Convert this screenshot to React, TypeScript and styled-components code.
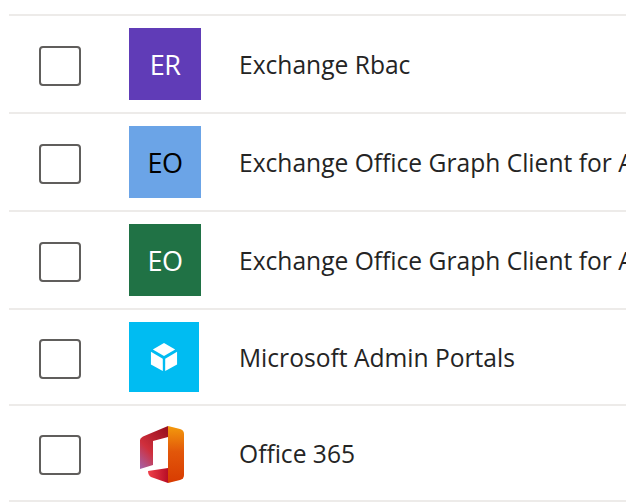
import styled, { createGlobalStyle } from "styled-components";

const Global = createGlobalStyle`
  html, body {
    margin: 0;
    padding: 0;
    background: #fff;
    overflow: hidden;
  }
`;

const List = styled.div`
  width: 626px;
  height: 503px;
  overflow: hidden;
  padding: 14px 0 0 9px;
  box-sizing: border-box;
  font-family: "Open Sans", "Noto Sans", sans-serif;
`;

const Row = styled.div<{ $height: number }>`
  height: ${(p) => p.$height}px;
  box-sizing: border-box;
  border-top: 2px solid #edebe9;
  display: flex;
  align-items: center;
  white-space: nowrap;
  &:last-child {
    border-bottom: 2px solid #edebe9;
  }
`;

const CheckCell = styled.div`
  width: 120px;
  flex: none;
  padding: 4px 0 0 30px;
  box-sizing: border-box;
`;

const Checkbox = styled.div`
  width: 42px;
  height: 40px;
  box-sizing: border-box;
  border: 2px solid #605e5c;
  border-radius: 4px;
`;

const IconCell = styled.div`
  width: 110px;
  flex: none;
`;

const Tile = styled.div<{ $bg: string; $fg: string; $size?: number }>`
  width: ${(p) => p.$size ?? 72}px;
  height: ${(p) => p.$size ?? 72}px;
  background: ${(p) => p.$bg};
  color: ${(p) => p.$fg};
  font-size: 27px;
  letter-spacing: -0.5px;
  display: flex;
  align-items: center;
  justify-content: center;
`;

const Name = styled.div`
  font-size: 24.6px;
  color: #242424;
`;

const OfficeSvg = styled.svg`
  display: block;
  margin: 2px 0 0 11px;
`;

const CubeIcon = () => (
  <svg width="28" height="30" viewBox="0 0 30 32">
    <path d="M15 1 L27 8 L15 15 L3 8 Z" fill="#fff" />
    <path d="M1 10.5 L13.7 18 L13.7 31 L1 24 Z" fill="#fff" />
    <path d="M29 10.5 L16.3 18 L16.3 31 L29 24 Z" fill="#fff" />
  </svg>
);

const OfficeIcon = () => (
  <OfficeSvg width="44" height="57" viewBox="0 0 44 57">
    <defs>
      <linearGradient id="o-right" x1="0" y1="0" x2="0" y2="1">
        <stop offset="0" stopColor="#f39a0c" />
        <stop offset="0.45" stopColor="#e2570a" />
        <stop offset="1" stopColor="#d83b01" />
      </linearGradient>
      <linearGradient id="o-left" x1="0.8" y1="0" x2="0.1" y2="1">
        <stop offset="0" stopColor="#9c1220" />
        <stop offset="0.6" stopColor="#cf2f3c" />
        <stop offset="1" stopColor="#a85ea0" />
      </linearGradient>
      <linearGradient id="o-bottom" x1="0" y1="0" x2="1" y2="0">
        <stop offset="0" stopColor="#f0404a" />
        <stop offset="1" stopColor="#b80d26" />
      </linearGradient>
    </defs>
    <path d="M0 14 Q0 12 3 10.5 L28 0 L28 11 L13 15 L13 39 L0 43 Z" fill="url(#o-left)" />
    <path d="M8 45 L28 42 L28 57 L11 51 Q8 49 8 45 Z" fill="url(#o-bottom)" />
    <path d="M28 0 L40 3 Q44 4 44 8 L44 49 Q44 53 40 54 L28 57 Z" fill="url(#o-right)" />
  </OfficeSvg>
);

const rows = [
  { height: 98, name: "Exchange Rbac", icon: <Tile $bg="#603cb7" $fg="#fff">ER</Tile> },
  { height: 98, name: "Exchange Office Graph Client for AAD - Interactive", icon: <Tile $bg="#6ba4e7" $fg="#000">EO</Tile> },
  { height: 98, name: "Exchange Office Graph Client for AAD - Noninteractive", icon: <Tile $bg="#207245" $fg="#fff">EO</Tile> },
  { height: 96, name: "Microsoft Admin Portals", icon: <Tile $bg="#00bcf2" $fg="#fff" $size={70}><CubeIcon /></Tile> },
  { height: 98, name: "Office 365", icon: <OfficeIcon /> },
];

export default function App() {
  return (
    <List>
      <Global />
      {rows.map((r) => (
        <Row key={r.name} $height={r.height}>
          <CheckCell>
            <Checkbox />
          </CheckCell>
          <IconCell>{r.icon}</IconCell>
          <Name>{r.name}</Name>
        </Row>
      ))}
    </List>
  );
}
